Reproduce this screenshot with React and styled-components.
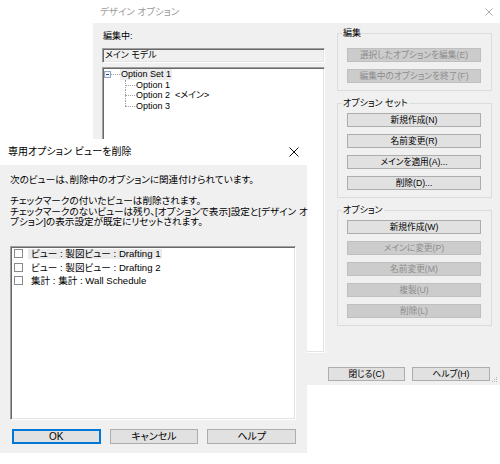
import React from 'react';
import styled, { createGlobalStyle, css } from 'styled-components';

const GlobalStyle = createGlobalStyle`
  html, body { margin: 0; padding: 0; background: #fff; }
  body { font-family: "Liberation Sans", "Noto Sans CJK JP", sans-serif; }
  *, *::before, *::after { box-sizing: border-box; }
`;

const UI_FONT = `"Liberation Sans", "Noto Sans CJK JP", sans-serif`;

const Desktop = styled.div`
  position: relative;
  width: 500px;
  height: 464px;
  overflow: hidden;
  background: #fff;
  font-family: ${UI_FONT};
  font-feature-settings: "palt" 1;
  color: #000;
`;

const Window = styled.div`
  position: absolute;
  left: ${p => p.$x}px;
  top: ${p => p.$y}px;
  width: ${p => p.$w}px;
  height: ${p => p.$h}px;
  z-index: ${p => p.$z};
  display: flex;
  flex-direction: column;
  background: #f0f0f0;
`;

const TitleBar = styled.div`
  flex: none;
  height: ${p => p.$h}px;
  background: #fff;
  display: flex;
  align-items: center;
  justify-content: space-between;
  padding: 0 ${p => p.$pr}px 0 ${p => p.$pl}px;
  font-size: ${p => p.$fs}px;
  line-height: 10px;
  color: ${p => (p.$active ? '#000' : '#9a9a9a')};
  white-space: nowrap;
`;

const sunken = css`
  border: 1px solid;
  border-color: #a0a0a0 #ffffff #ffffff #a0a0a0;
  box-shadow: inset 1px 1px 0 #696969, inset -1px -1px 0 #e3e3e3;
`;

/* ---------- back dialog ---------- */
const DesignBody = styled.div`
  flex: 1;
  position: relative;
  display: grid;
  grid-template-columns: 223px 155px;
  column-gap: 12px;
  align-items: start;
  padding: 0 8px 0 9px;
`;

const LeftColumn = styled.div`
  display: flex;
  flex-direction: column;
  padding-top: 8px;
`;

const FieldLabel = styled.div`
  font-size: 9px;
  line-height: 10px;
  height: 10px;
  padding-left: 1px;
`;

const ReadOnlyBox = styled.div`
  ${sunken};
  margin-top: 7px;
  height: 15px;
  background: #f0f0f0;
  font-size: 9px;
  line-height: 13px;
  padding-left: 2px;
`;

const TreeBox = styled.div`
  ${sunken};
  margin-top: 4px;
  height: 286px;
  background: #fff;
  padding-top: 1px;
  font-size: 9px;
`;

const TreeRow = styled.div`
  display: flex;
  align-items: stretch;
  height: 10.5px;
  padding-left: ${p => p.$indent}px;
  white-space: pre;
`;

const Expander = styled.span`
  display: flex;
  align-items: center;
`;

const RootConnector = styled.span`
  width: 9px;
  align-self: center;
  border-top: 1px dotted #a0a0a0;
`;

const Connector = styled.span`
  position: relative;
  width: 10px;
  &::before {
    content: '';
    position: absolute;
    left: 0;
    top: 0;
    bottom: ${p => (p.$last ? '50%' : '0')};
    border-left: 1px dotted #a0a0a0;
  }
  &::after {
    content: '';
    position: absolute;
    left: 0;
    right: 0;
    top: 50%;
    border-top: 1px dotted #a0a0a0;
  }
`;

const TreeLabel = styled.span`
  display: flex;
  align-items: center;
  padding: 0 1px;
  background: ${p => (p.$highlight ? '#ececec' : 'transparent')};
  line-height: 10px;
`;

const RightColumn = styled.div`
  display: flex;
  flex-direction: column;
  gap: 7px;
  padding-top: 5px;
`;

const Group = styled.fieldset`
  margin: 0;
  min-width: 0;
  border: 1px solid #dcdcdc;
  padding: ${p => p.$pt}px 10px 7px 9px;
`;

const Legend = styled.legend`
  font-size: 9px;
  line-height: 10px;
  padding: 0 1px;
  margin-left: -5px;
  white-space: nowrap;
`;

const ButtonStack = styled.div`
  display: flex;
  flex-direction: column;
  gap: 7px;
`;

const Button = styled.button`
  font-family: ${UI_FONT};
  font-feature-settings: "palt" 1;
  font-size: ${p => p.$fs || 8.7}px;
  line-height: 10px;
  height: ${p => p.$h || 14}px;
  width: ${p => (p.$w ? `${p.$w}px` : '100%')};
  padding: 0;
  margin: 0;
  white-space: nowrap;
  color: #000;
  background: #e1e1e1;
  border: 1px solid #adadad;
  border-radius: 0;
  &:disabled {
    background: #cccccc;
    border-color: #bfbfbf;
    color: #8c8c8c;
  }
  ${p => p.$default && css`
    border: 2px solid #0078d7;
  `}
`;

const Footer = styled.div`
  grid-column: 1 / -1;
  display: flex;
  justify-content: flex-end;
  gap: 7px;
  margin-top: 10px;
  padding-right: 2px;
  padding-left: 1px;
`;

const Grip = styled.svg`
  position: absolute;
  right: 2px;
  bottom: 2px;
`;

/* ---------- front dialog ---------- */
const DeleteBody = styled.div`
  flex: 1;
  display: flex;
  flex-direction: column;
  padding: 10px 11px 9px 10px;
  min-height: 0;
`;

const Message = styled.div`
  font-size: 9.6px;
  line-height: 10.5px;
  white-space: nowrap;
`;

const Para = styled.p`
  margin: ${p => p.$mt || 0}px 0 0 0;
`;

const ViewList = styled.div`
  ${sunken};
  flex: 1;
  margin-top: 18.5px;
  background: #fff;
  font-size: 9.6px;
`;

const ViewRow = styled.div`
  display: flex;
  align-items: center;
  height: 13.5px;
  padding-left: 3px;
  white-space: pre;
`;

const CheckBox = styled.span`
  flex: none;
  width: 9px;
  height: 9px;
  border: 1px solid #8a8a8a;
  background: #fff;
`;

const ViewLabel = styled.span`
  margin-left: 5px;
  padding: 0 2px 0 3px;
  height: 9.5px;
  line-height: 9.5px;
  background: ${p => (p.$focus ? '#ebebeb' : 'transparent')};
`;

const DialogButtons = styled.div`
  flex: none;
  display: grid;
  grid-template-columns: repeat(3, 1fr);
  gap: 9px;
  margin-top: 9px;
  padding-left: 2px;
`;

const CloseIcon = ({ color, size }) => (
  <svg width={size} height={size} viewBox="0 0 10 10">
    <path d="M0.5 0.5 L9.5 9.5 M9.5 0.5 L0.5 9.5" stroke={color} strokeWidth="1" fill="none" />
  </svg>
);

const MinusBox = () => (
  <svg width="7" height="7" viewBox="0 0 7 7">
    <rect x="0.5" y="0.5" width="6" height="6" fill="#eef3fa" stroke="#93a5c0" />
    <path d="M2 3.5 H5" stroke="#2e4f85" strokeWidth="1" />
  </svg>
);

const tree = ['Option 1', 'Option 2  <メイン>', 'Option 3'];

const views = [
  { label: 'ビュー : 製図ビュー : Drafting 1', focus: true },
  { label: 'ビュー : 製図ビュー : Drafting 2' },
  { label: '集計 : 集計 : Wall Schedule' },
];

export default function App() {
  return (
    <>
      <GlobalStyle />
      <Desktop>
        <Window $x={93} $y={0} $w={407} $h={385} $z={1}>
          <TitleBar $h={23} $pl={7} $pr={7} $fs={9.5}>
            <span>デザイン オプション</span>
            <CloseIcon color="#9a9a9a" size={8} />
          </TitleBar>
          <DesignBody>
            <LeftColumn>
              <FieldLabel>編集中:</FieldLabel>
              <ReadOnlyBox>メイン モデル</ReadOnlyBox>
              <TreeBox>
                <TreeRow $indent={1}>
                  <Expander><MinusBox /></Expander>
                  <RootConnector />
                  <TreeLabel $highlight>Option Set 1</TreeLabel>
                </TreeRow>
                {tree.map((t, i) => (
                  <TreeRow key={t} $indent={22}>
                    <Connector $last={i === tree.length - 1} />
                    <TreeLabel>{t}</TreeLabel>
                  </TreeRow>
                ))}
              </TreeBox>
            </LeftColumn>
            <RightColumn>
              <Group $pt={10}>
                <Legend>編集</Legend>
                <ButtonStack>
                  <Button disabled>選択したオプションを編集(E)</Button>
                  <Button disabled>編集中のオプションを終了(F)</Button>
                </ButtonStack>
              </Group>
              <Group $pt={5}>
                <Legend>オプション セット</Legend>
                <ButtonStack>
                  <Button>新規作成(N)</Button>
                  <Button>名前変更(R)</Button>
                  <Button>メインを適用(A)...</Button>
                  <Button>削除(D)...</Button>
                </ButtonStack>
              </Group>
              <Group $pt={5}>
                <Legend>オプション</Legend>
                <ButtonStack>
                  <Button>新規作成(W)</Button>
                  <Button disabled>メインに変更(P)</Button>
                  <Button disabled>名前変更(M)</Button>
                  <Button disabled>複製(U)</Button>
                  <Button disabled>削除(L)</Button>
                </ButtonStack>
              </Group>
            </RightColumn>
            <Footer>
              <Button $w={77}>閉じる(C)</Button>
              <Button $w={78}>ヘルプ(H)</Button>
            </Footer>
            <Grip width="6" height="6" viewBox="0 0 6 6">
              <rect x="4" y="0" width="1" height="1" fill="#b8b8b8" />
              <rect x="2" y="2" width="1" height="1" fill="#b8b8b8" />
              <rect x="4" y="2" width="1" height="1" fill="#b8b8b8" />
              <rect x="0" y="4" width="1" height="1" fill="#b8b8b8" />
              <rect x="2" y="4" width="1" height="1" fill="#b8b8b8" />
              <rect x="4" y="4" width="1" height="1" fill="#b8b8b8" />
            </Grip>
          </DesignBody>
        </Window>

        <Window $x={0} $y={139} $w={307} $h={314} $z={2}>
          <TitleBar $h={26} $pl={8} $pr={8} $fs={10} $active>
            <span>専用オプション ビューを削除</span>
            <CloseIcon color="#111" size={10} />
          </TitleBar>
          <DeleteBody>
            <Message>
              <Para>次のビューは、削除中のオプションに関連付けられています。</Para>
              <Para $mt={10.5}>
                チェックマークの付いたビューは削除されます。<br />
                チェックマークのないビューは残り、[オプションで表示]設定と[デザイン オ<br />
                プション]の表示設定が既定にリセットされます。
              </Para>
            </Message>
            <ViewList>
              {views.map(v => (
                <ViewRow key={v.label}>
                  <CheckBox />
                  <ViewLabel $focus={v.focus}>{v.label}</ViewLabel>
                </ViewRow>
              ))}
            </ViewList>
            <DialogButtons>
              <Button $default $h={15} $fs={10}>OK</Button>
              <Button $h={15} $fs={10}>キャンセル</Button>
              <Button $h={15} $fs={10}>ヘルプ</Button>
            </DialogButtons>
          </DeleteBody>
        </Window>
      </Desktop>
    </>
  );
}
